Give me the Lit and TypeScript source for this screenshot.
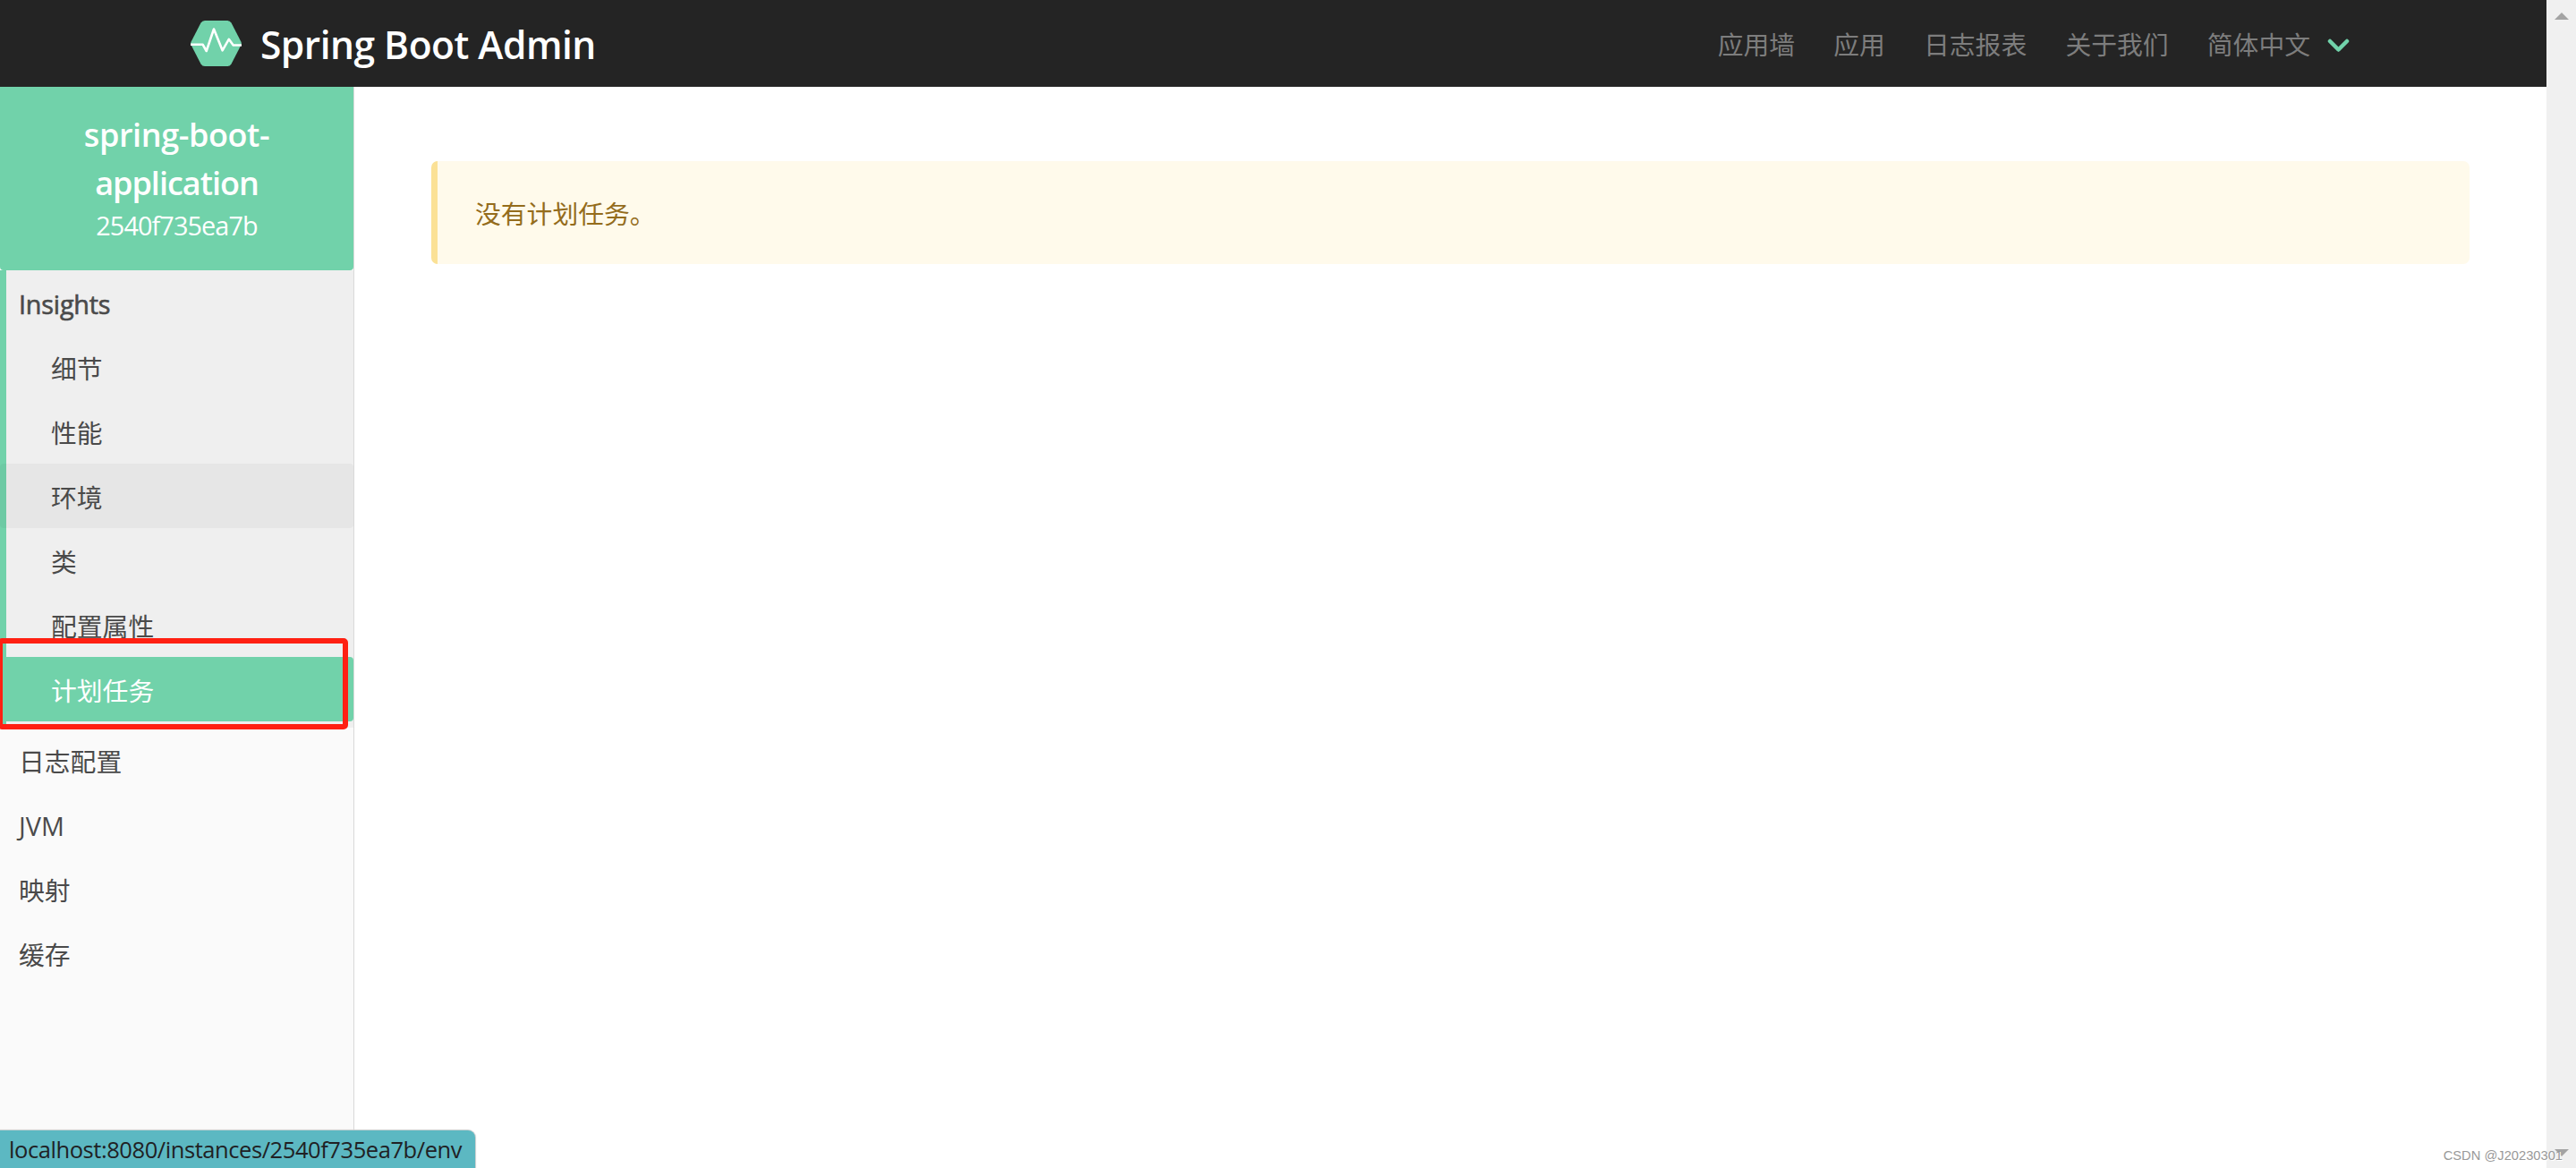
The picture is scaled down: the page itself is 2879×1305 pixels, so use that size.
import { LitElement, html, css } from "lit";
import { customElement } from "lit/decorators.js";
import { classMap } from "lit/directives/class-map.js";

interface Entry {
  label: string;
  hovered?: boolean;
  active?: boolean;
}

@customElement("app-navbar")
class AppNavbar extends LitElement {
  static styles = css`
    :host {
      display: flex;
      align-items: center;
      justify-content: space-between;
      height: 97px;
      padding: 0 220px 0 213px;
      box-sizing: border-box;
      background: #242424;
      flex: none;
    }
    .brand {
      display: flex;
      align-items: center;
      gap: 21px;
      color: #fff;
      font-size: 42.5px;
      font-weight: 600;
      letter-spacing: -0.5px;
      line-height: 60px;
      white-space: nowrap;
      padding-top: 3px;
    }
    .logo {
      width: 57px;
      height: 51px;
      margin-top: -3px;
    }
    .links {
      display: flex;
      align-items: center;
      gap: 43.2px;
      color: #7d7d7d;
      font-size: 28.8px;
      line-height: 44px;
      padding-top: 2px;
    }
    .language {
      display: flex;
      align-items: center;
      gap: 19px;
    }
    .chevron {
      width: 25px;
      height: 16px;
    }
  `;

  render() {
    return html`
      <div class="brand">
        <svg class="logo" viewBox="0 0 57 51">
          <path
            fill="#71d2aa"
            d="M16 0H41Q44 0 45.500 2.500L56.300 23.500Q57.300 25.500 56.300 27.500L45.500 48.500Q44 51 41 51H16Q13 51 11.500 48.500L.7 27.500Q-.3 25.500 .7 23.500L11.500 2.500Q13 0 16 0Z"
          />
          <path
            fill="none"
            stroke="#fff"
            stroke-width="2.600"
            stroke-linejoin="round"
            d="M0 26.800H13.700L17.700 34L26 9.500L35.600 33.300L42.800 20.800L47.700 27.500H57"
          />
        </svg>
        <span>Spring Boot Admin</span>
      </div>
      <nav class="links">
        <span>应用墙</span>
        <span>应用</span>
        <span>日志报表</span>
        <span>关于我们</span>
        <span class="language">
          简体中文
          <svg class="chevron" viewBox="0 0 25 16">
            <path
              fill="none"
              stroke="#71d2aa"
              stroke-width="4.500"
              stroke-linecap="round"
              stroke-linejoin="round"
              d="M3 4L12.500 13.500L22 4"
            />
          </svg>
        </span>
      </nav>
    `;
  }
}

@customElement("app-sidebar")
class AppSidebar extends LitElement {
  static styles = css`
    :host {
      display: flex;
      flex-direction: column;
      width: 396px;
      box-sizing: border-box;
      border-right: 1px solid #d9d9d9;
      background: #fafafa;
      color: #4a4a4a;
      flex: none;
    }
    .instance {
      height: 205px;
      box-sizing: border-box;
      padding: 27px 72px 0;
      border-radius: 0 0 4px 4px;
      background: #71d2aa;
      color: #fff;
      text-align: center;
    }
    .name {
      font-size: 36px;
      font-weight: 600;
      line-height: 54px;
      letter-spacing: -0.4px;
    }
    .tail {
      letter-spacing: -1px;
    }
    .id {
      font-size: 28.8px;
      line-height: 40px;
      letter-spacing: -0.9px;
    }
    .group {
      border-left: 7px solid #71d2aa;
      background: #efefef;
      padding-bottom: 7px;
    }
    .row {
      height: 72px;
      display: flex;
      align-items: center;
      box-sizing: border-box;
      padding: 2px 0 0 21px;
      font-size: 28.8px;
      line-height: 43px;
    }
    .heading {
      padding-left: 14px;
      -webkit-text-stroke: 0.6px currentColor;
      letter-spacing: -0.2px;
    }
    .child {
      margin-left: -7px;
      padding-left: 57px;
      border-radius: 4px;
    }
    .hovered {
      background: rgba(0, 0, 0, 0.037);
    }
    .active {
      background: #71d2aa;
      color: #fff;
    }
  `;

  private insights: Entry[] = [
    { label: "细节" },
    { label: "性能" },
    { label: "环境", hovered: true },
    { label: "类" },
    { label: "配置属性" },
    { label: "计划任务", active: true },
  ];

  private views = ["日志配置", "JVM", "映射", "缓存"];

  render() {
    return html`
      <div class="instance">
        <div class="name">spring-boot-<wbr /><span class="tail">application</span></div>
        <div class="id">2540f735ea7b</div>
      </div>
      <div class="group">
        <div class="row heading">Insights</div>
        ${this.insights.map(
          (e) => html`<div
            class=${classMap({ row: true, child: true, hovered: !!e.hovered, active: !!e.active })}
          >
            ${e.label}
          </div>`
        )}
      </div>
      ${this.views.map((label) => html`<div class="row">${label}</div>`)}
    `;
  }
}

@customElement("app-root")
class AppRoot extends LitElement {
  static styles = css`
    :host {
      display: flex;
      position: relative;
      width: 2879px;
      height: 1305px;
      overflow: hidden;
      background: #fff;
      font-family: "Open Sans", "Noto Sans CJK SC", sans-serif;
    }
    .page {
      flex: 1;
      display: flex;
      flex-direction: column;
    }
    .body {
      flex: 1;
      display: flex;
    }
    .content {
      flex: 1;
      padding: 83px 86px 0;
    }
    .message {
      height: 115px;
      box-sizing: border-box;
      display: flex;
      align-items: center;
      padding: 2px 43px 0 42px;
      border-left: 7px solid #fbe196;
      border-radius: 7px;
      background: #fffaeb;
      color: #946c1c;
      font-size: 28.8px;
      line-height: 43px;
    }
    .scrollbar {
      width: 33px;
      display: flex;
      flex-direction: column;
      align-items: center;
      justify-content: space-between;
      box-sizing: border-box;
      padding: 14px 0 13px 1px;
      background: #f0f0f0;
    }
    .arrow {
      width: 16px;
      height: 8px;
      fill: #a3a3a3;
    }
    .highlight {
      position: absolute;
      left: -3px;
      top: 713px;
      width: 392px;
      height: 102px;
      box-sizing: border-box;
      border: 6px solid #ff2012;
      border-radius: 5px;
    }
    .status {
      position: absolute;
      left: 0;
      bottom: 0;
      width: 531px;
      height: 42px;
      box-sizing: border-box;
      padding-left: 10px;
      border-radius: 0 8px 0 0;
      background: #5cb8c2;
      box-shadow: 0 0 1px 1px #c6cccd;
      color: #202124;
      font-size: 25.5px;
      line-height: 43px;
      letter-spacing: -0.43px;
      white-space: nowrap;
    }
    .watermark {
      position: absolute;
      right: 15px;
      bottom: 5px;
      color: #999;
      font: 14.7px/18px "Liberation Sans", sans-serif;
      text-shadow: 1px 1px 0 #fff;
    }
  `;

  render() {
    return html`
      <div class="page">
        <app-navbar></app-navbar>
        <div class="body">
          <app-sidebar></app-sidebar>
          <main class="content">
            <div class="message">没有计划任务。</div>
          </main>
        </div>
      </div>
      <div class="scrollbar">
        <svg class="arrow" viewBox="0 0 16 8"><path d="M0 8L8 0L16 8Z" /></svg>
        <svg class="arrow" viewBox="0 0 16 8"><path d="M0 0L8 8L16 0Z" /></svg>
      </div>
      <div class="highlight"></div>
      <div class="status">localhost:8080/instances/2540f735ea7b/env</div>
      <div class="watermark">CSDN @J20230301</div>
    `;
  }
}
